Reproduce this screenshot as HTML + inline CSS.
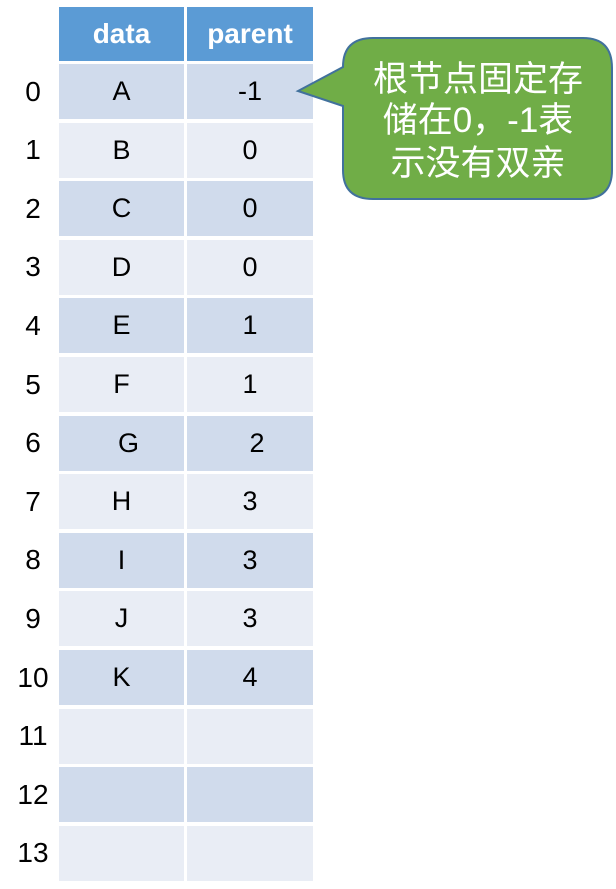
<!DOCTYPE html>
<html><head><meta charset="utf-8"><style>
html,body{margin:0;padding:0;background:#fff;width:616px;height:889px;overflow:hidden;position:relative}
.c{position:absolute;display:flex;align-items:center;justify-content:center;font-family:"Liberation Sans","Noto Sans CJK SC",sans-serif;font-size:27px;color:#000}
.h{background:#5b9bd5;color:#fff;font-weight:bold;font-size:28px}
.n{font-size:28px}
</style></head><body>
<div class="c h" style="left:59px;top:7px;width:125px;height:54px">data</div>
<div class="c h" style="left:187px;top:7px;width:126px;height:54px">parent</div>
<div id="rows"></div>
<svg style="position:absolute;left:0;top:0" width="616" height="889">
<path d="M373,38 H583 Q612,38 612,68 V170 Q612,199 583,199 H373 Q343,199 343,170 V106 L298,91 L343,67 Q343,38 373,38 Z" fill="#70ad47" stroke="#41719c" stroke-width="2"/>
<g font-family="Liberation Sans,Noto Sans CJK SC,sans-serif" font-size="35" fill="#fff" text-anchor="middle">
<text x="478" y="91">根节点固定存</text>
<text x="478" y="132">储在0，-1表</text>
<text x="478" y="175">示没有双亲</text>
</g>
</svg>
<script>
var d=["A","B","C","D","E","F","G","H","I","J","K","","",""];
var p=["-1","0","0","0","1","1","2","3","3","3","4","","",""];
var h="";
for(var i=0;i<14;i++){var t=64+i*58.6;var bg=i%2?"#e9edf5":"#d0dbec";
var o1=i==6?7:0;
h+='<div class="c n" style="left:0;top:'+t+'px;width:66px;height:55px">'+i+'</div>';
h+='<div class="c" style="left:59px;top:'+t+'px;width:125px;height:55px;background:'+bg+'"><span style="position:relative;left:'+o1+'px">'+d[i]+'</span></div>';
h+='<div class="c" style="left:187px;top:'+t+'px;width:126px;height:55px;background:'+bg+'"><span style="position:relative;left:'+o1+'px">'+p[i]+'</span></div>';}
document.getElementById("rows").innerHTML=h;
</script>
</body></html>
